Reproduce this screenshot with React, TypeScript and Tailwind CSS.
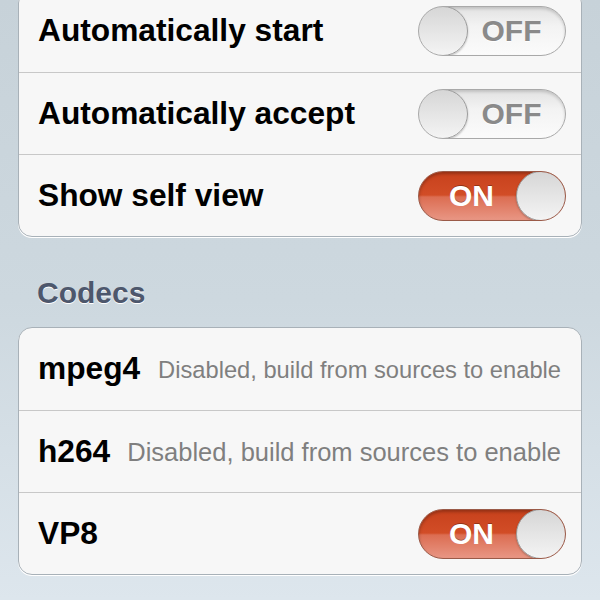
import React from 'react';

const font = { fontFamily: '"Liberation Sans", Arial, sans-serif' };

const Toggle: React.FC<{ on: boolean }> = ({ on }) => {
  const knob = (
    <div className="h-[50px] w-[50px] shrink-0 rounded-full border border-[#9c9c9c] bg-[linear-gradient(to_bottom,#d6d6d6,#f4f4f4)] shadow-[0_1px_2px_rgba(0,0,0,0.25)]" />
  );
  if (on) {
    return (
      <div className="flex h-[50px] w-[148px] items-center overflow-hidden rounded-full border border-[#9a5a48] bg-[linear-gradient(to_bottom,#c7411c_0%,#d24d27_48%,#dc6d52_52%,#e89684_100%)] shadow-[inset_0_2px_3px_rgba(0,0,0,0.25)]">
        <span className="flex-1 pl-[8px] text-center text-[30px] font-bold leading-none text-white [text-shadow:0_-1px_0_rgba(0,0,0,0.3)]">
          ON
        </span>
        <div className="-mr-px">{knob}</div>
      </div>
    );
  }
  return (
    <div className="flex h-[50px] w-[148px] items-center overflow-hidden rounded-full border border-[#a9a9a9] bg-[linear-gradient(to_bottom,#e2e2e2_0%,#f3f3f3_40%,#fbfbfb_100%)] shadow-[inset_0_2px_3px_rgba(0,0,0,0.15)]">
      <div className="-ml-px">{knob}</div>
      <span className="flex-1 pr-[10px] text-center text-[30px] font-bold leading-none text-[#8a8a8a] [text-shadow:0_1px_0_#ffffff]">
        OFF
      </span>
    </div>
  );
};

const Row: React.FC<{ first?: boolean; children: React.ReactNode }> = ({ first, children }) => (
  <div className={`flex h-[82px] items-center gap-[12px] pl-[19px] pr-[15px] ${first ? '' : 'border-t border-[#c8c8c8]'}`}>
    {children}
  </div>
);

const Title: React.FC<{ children: React.ReactNode }> = ({ children }) => (
  <span className="shrink-0 whitespace-nowrap text-[31.7px] font-bold leading-none text-black">{children}</span>
);

export default function App() {
  return (
    <div
      style={font}
      className="h-[600px] w-[600px] overflow-hidden bg-[linear-gradient(to_bottom,#c7d2d9_0%,#cdd8df_50%,#dde6ed_100%)]"
    >
      {/* Video settings */}
      <div className="mx-[18px] -mt-[11px] overflow-hidden rounded-[14px] border border-[#a8b1b8] bg-[#f7f7f7] shadow-[0_1px_0_#ffffff]">
        <Row first>
          <Title>Automatically start</Title>
          <div className="ml-auto"><Toggle on={false} /></div>
        </Row>
        <Row>
          <Title>Automatically accept</Title>
          <div className="ml-auto"><Toggle on={false} /></div>
        </Row>
        <Row>
          <Title>Show self view</Title>
          <div className="ml-auto"><Toggle on /></div>
        </Row>
      </div>

      {/* Codecs header */}
      <div className="flex h-[90px] items-start pl-[37px] pt-[41px]">
        <span className="text-[30px] font-bold leading-none text-[#4d576c] [text-shadow:0_1px_0_#ffffff]">
          Codecs
        </span>
      </div>

      <div className="mx-[18px] overflow-hidden rounded-[14px] border border-[#a8b1b8] bg-[#f7f7f7] shadow-[0_1px_0_#ffffff]">
        <Row first>
          <Title>mpeg4</Title>
          <span className="ml-auto whitespace-nowrap pr-[5px] pt-[3px] text-[23.7px] leading-none text-[#7f7f7f]">
            Disabled, build from sources to enable
          </span>
        </Row>
        <Row>
          <Title>h264</Title>
          <span className="ml-auto whitespace-nowrap pr-[5px] pt-[3px] text-[25.5px] leading-none text-[#7f7f7f]">
            Disabled, build from sources to enable
          </span>
        </Row>
        <Row>
          <Title>VP8</Title>
          <div className="ml-auto"><Toggle on /></div>
        </Row>
      </div>
    </div>
  );
}
